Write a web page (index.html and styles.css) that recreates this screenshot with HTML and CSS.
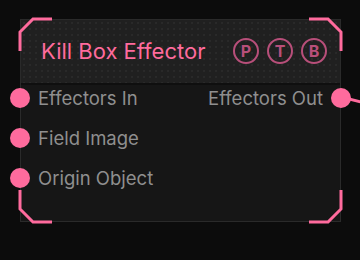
FILE: index.html
```html
<!DOCTYPE html>
<html lang="en">
<head>
    <meta charset="UTF-8">
    <meta name="viewport" content="width=device-width, initial-scale=1.0">
    <title>Kill Box Effector</title>
    <link rel="stylesheet" href="styles.css">
</head>
<body>

<div class="node">
    <!-- 角落裝飾 -->
    <svg class="corner tl" width="36" height="36" viewBox="0 0 36 36"><path d="M2 34 V15 L15 2 H34"/></svg>
    <svg class="corner tr" width="36" height="36" viewBox="0 0 36 36"><path d="M2 34 V15 L15 2 H34"/></svg>
    <svg class="corner bl" width="36" height="36" viewBox="0 0 36 36"><path d="M2 34 V15 L15 2 H34"/></svg>
    <svg class="corner br" width="36" height="36" viewBox="0 0 36 36"><path d="M2 34 V15 L15 2 H34"/></svg>

    <div class="node-header">
        <div class="title">Kill Box Effector</div>
        <div class="badges">
            <span class="badge">P</span>
            <span class="badge">T</span>
            <span class="badge">B</span>
        </div>
    </div>

    <div class="node-body">
        <div class="row">
            <div class="port in"><span class="dot"></span>Effectors In</div>
            <div class="port out">Effectors Out<span class="dot"></span></div>
        </div>
        <div class="row">
            <div class="port in"><span class="dot"></span>Field Image</div>
        </div>
        <div class="row">
            <div class="port in"><span class="dot"></span>Origin Object</div>
        </div>
    </div>
</div>

<svg class="wire" width="20" height="12" viewBox="0 0 20 12"><path d="M0 2 L20 7"/></svg>

</body>
</html>
```

FILE: styles.css
```css
body {
    margin: 0;
    padding: 0;
    background-color: #0c0c0c;
    font-family: Inter, "Liberation Sans", sans-serif;
    width: 360px;
    height: 260px;
    overflow: hidden;
    position: relative;
}

.node {
    position: relative;
    margin: 19px 0 0 20px;
    width: 319px;
    height: 201px;
    border: 1px solid #2a2a2a;
    background-color: #161616;
}

.node-header {
    height: 63px;
    border-bottom: 2px solid #0f0f0f;
    background-color: #202020;
    background-image: radial-gradient(circle, #292929 0.7px, transparent 1.1px);
    background-size: 6px 6px;
    display: flex;
    align-items: center;
    justify-content: space-between;
    padding: 0 13px 0 20px;
}
.node-header .title {
    color: #ff6b9d;
    font-size: 22px;
    margin-top: -2px;
}
.badges {
    display: flex;
    flex-shrink: 0;
    gap: 8px;
    margin-top: -2px;
}
.badge {
    box-sizing: border-box;
    flex-shrink: 0;
    width: 26px;
    height: 26px;
    border: 2px solid #b84f7a;
    border-radius: 50%;
    color: #b84f7a;
    font-size: 16px;
    font-weight: bold;
    display: flex;
    align-items: center;
    justify-content: center;
}

.node-body {
    padding-top: 1px;
    display: flex;
    flex-direction: column;
    gap: 16px;
}
.row {
    height: 24px;
    display: flex;
    justify-content: space-between;
    align-items: center;
}
.port {
    display: flex;
    align-items: center;
    gap: 8px;
    color: #8f8f8f;
    font-size: 18.5px;
}
.port .dot {
    width: 20px;
    height: 20px;
    border-radius: 50%;
    background-color: #ff6b9d;
}
.port.in {
    margin-left: -11px;
}
.port.out {
    margin-left: auto;
    margin-right: -11px;
}

/* 角落樣式 */
.corner {
    position: absolute;
}
.corner path {
    fill: none;
    stroke: #ff6b9d;
    stroke-width: 3;
}
.corner.tl { left: -3px; top: -3px; }
.corner.tr { right: -3px; top: -3px; transform: scaleX(-1); }
.corner.bl { left: -3px; bottom: -3px; transform: scaleY(-1); }
.corner.br { right: -3px; bottom: -3px; transform: scale(-1, -1); }

.wire {
    position: absolute;
    left: 345px;
    top: 96px;
}
.wire path {
    stroke: #ff6b9d;
    stroke-width: 3;
    fill: none;
}
```
